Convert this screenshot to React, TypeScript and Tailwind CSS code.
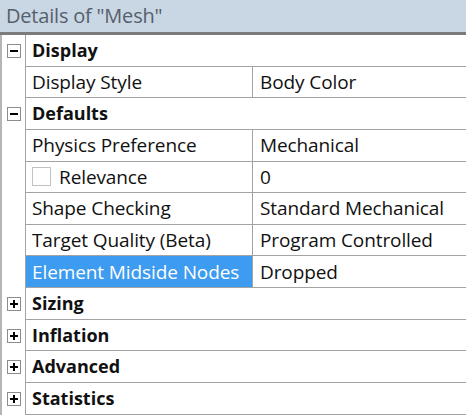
import React from "react";

type Row =
  | { kind: "cat"; label: string; open: boolean }
  | { kind: "prop"; label: string; value: string; check?: boolean; selected?: boolean };

const rows: Row[] = [
  { kind: "cat", label: "Display", open: true },
  { kind: "prop", label: "Display Style", value: "Body Color" },
  { kind: "cat", label: "Defaults", open: true },
  { kind: "prop", label: "Physics Preference", value: "Mechanical" },
  { kind: "prop", label: "Relevance", value: "0", check: true },
  { kind: "prop", label: "Shape Checking", value: "Standard Mechanical" },
  { kind: "prop", label: "Target Quality (Beta)", value: "Program Controlled" },
  { kind: "prop", label: "Element Midside Nodes", value: "Dropped", selected: true },
  { kind: "cat", label: "Sizing", open: false },
  { kind: "cat", label: "Inflation", open: false },
  { kind: "cat", label: "Advanced", open: false },
  { kind: "cat", label: "Statistics", open: false },
];

function ToggleBox({ open }: { open: boolean }) {
  return (
    <div className="relative w-[14px] h-[14px] border border-[#8c8c8c] bg-white">
      <div className="absolute left-[2px] top-[5px] w-[8px] h-[2px] bg-black" />
      {!open && <div className="absolute left-[5px] top-[2px] w-[2px] h-[8px] bg-black" />}
    </div>
  );
}

export default function App() {
  return (
    <div className="w-[466px] h-[415px] overflow-hidden bg-white font-['Open_Sans','Noto_Sans',sans-serif] text-[#111]">
      <div className="h-[32px] bg-[#c9d6e4] flex items-center px-[6px] text-[20px] text-[#56606b] tracking-[-0.2px]">
        Details of "Mesh"
      </div>
      <div className="h-[3px] bg-[#7b7b7b]" />
      <div className="border-l-2 border-[#b5b5b5]">
        {rows.map((r, i) => (
          <div key={i} className="flex h-[31.65px]">
            <div className="w-[23px] shrink-0 flex items-center justify-center">
              {r.kind === "cat" && <ToggleBox open={r.open} />}
            </div>
            <div className="flex-1 flex border-l border-b border-[#a3a3a3]">
              {r.kind === "cat" ? (
                <div className="flex items-center pl-[6px] text-[18px] font-bold">{r.label}</div>
              ) : (
                <>
                  <div
                    className={
                      "w-[227px] shrink-0 flex items-center pl-[6px] text-[19px] tracking-[-0.1px] border-r border-[#a3a3a3] " +
                      (r.selected ? "bg-[#3d9bf0] text-white" : "")
                    }
                  >
                    {r.check && (
                      <div className="w-[19px] h-[19px] border border-[#c2c2c2] bg-white mr-[8px]" />
                    )}
                    {r.label}
                  </div>
                  <div className="flex-1 flex items-center pl-[7px] text-[19px] tracking-[-0.1px]">{r.value}</div>
                </>
              )}
            </div>
          </div>
        ))}
      </div>
    </div>
  );
}
